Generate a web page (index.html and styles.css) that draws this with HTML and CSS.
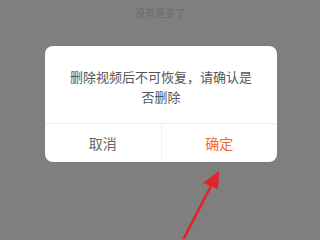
FILE: index.html
```html
<!DOCTYPE html>
<html lang="zh">
<head>
<meta charset="utf-8">
<link rel="stylesheet" href="styles.css">
</head>
<body>
<div class="page">
  <div class="more">没有更多了</div>
  <div class="dialog">
    <div class="msg">删除视频后不可恢复，请确认是否删除</div>
    <div class="actions">
      <div class="btn cancel">取消</div>
      <div class="btn ok">确定</div>
    </div>
  </div>
  <svg class="arrow" width="320" height="239" viewBox="0 0 320 239">
    <line x1="183" y1="240" x2="212" y2="184" stroke="#e2232b" stroke-width="2.6"/>
    <polygon points="219,171 203,183 218,189" fill="#e2232b"/>
  </svg>
</div>
</body>
</html>
```
FILE: styles.css
```css
html, body {
  margin: 0;
  padding: 0;
  background: #7f7f7f;
}
.page {
  position: relative;
  width: 320px;
  height: 239px;
  overflow: hidden;
  font-family: "Noto Sans CJK SC", "Noto Sans", sans-serif;
}
.more {
  padding-top: 5px;
  height: 15px;
  line-height: 15px;
  text-align: center;
  font-size: 10px;
  color: #6b6b6b;
}
.dialog {
  margin-top: 26px;
  margin-left: 45px;
  width: 232px;
  background: #fff;
  border-radius: 8px;
  overflow: hidden;
}
.msg {
  height: 78px;
  box-sizing: border-box;
  padding: 21px 24px 0;
  font-size: 13px;
  line-height: 20px;
  color: #555;
  text-align: center;
  border-bottom: 1px solid #eeeeee;
}
.actions {
  display: flex;
  height: 38px;
}
.btn {
  flex: 1;
  display: flex;
  align-items: center;
  justify-content: center;
  font-size: 14px;
}
.cancel {
  color: #666;
  border-right: 1px solid #f0f0f0;
}
.ok {
  color: #ef6b2c;
}
.arrow {
  position: absolute;
  left: 0;
  top: 0;
}
```
